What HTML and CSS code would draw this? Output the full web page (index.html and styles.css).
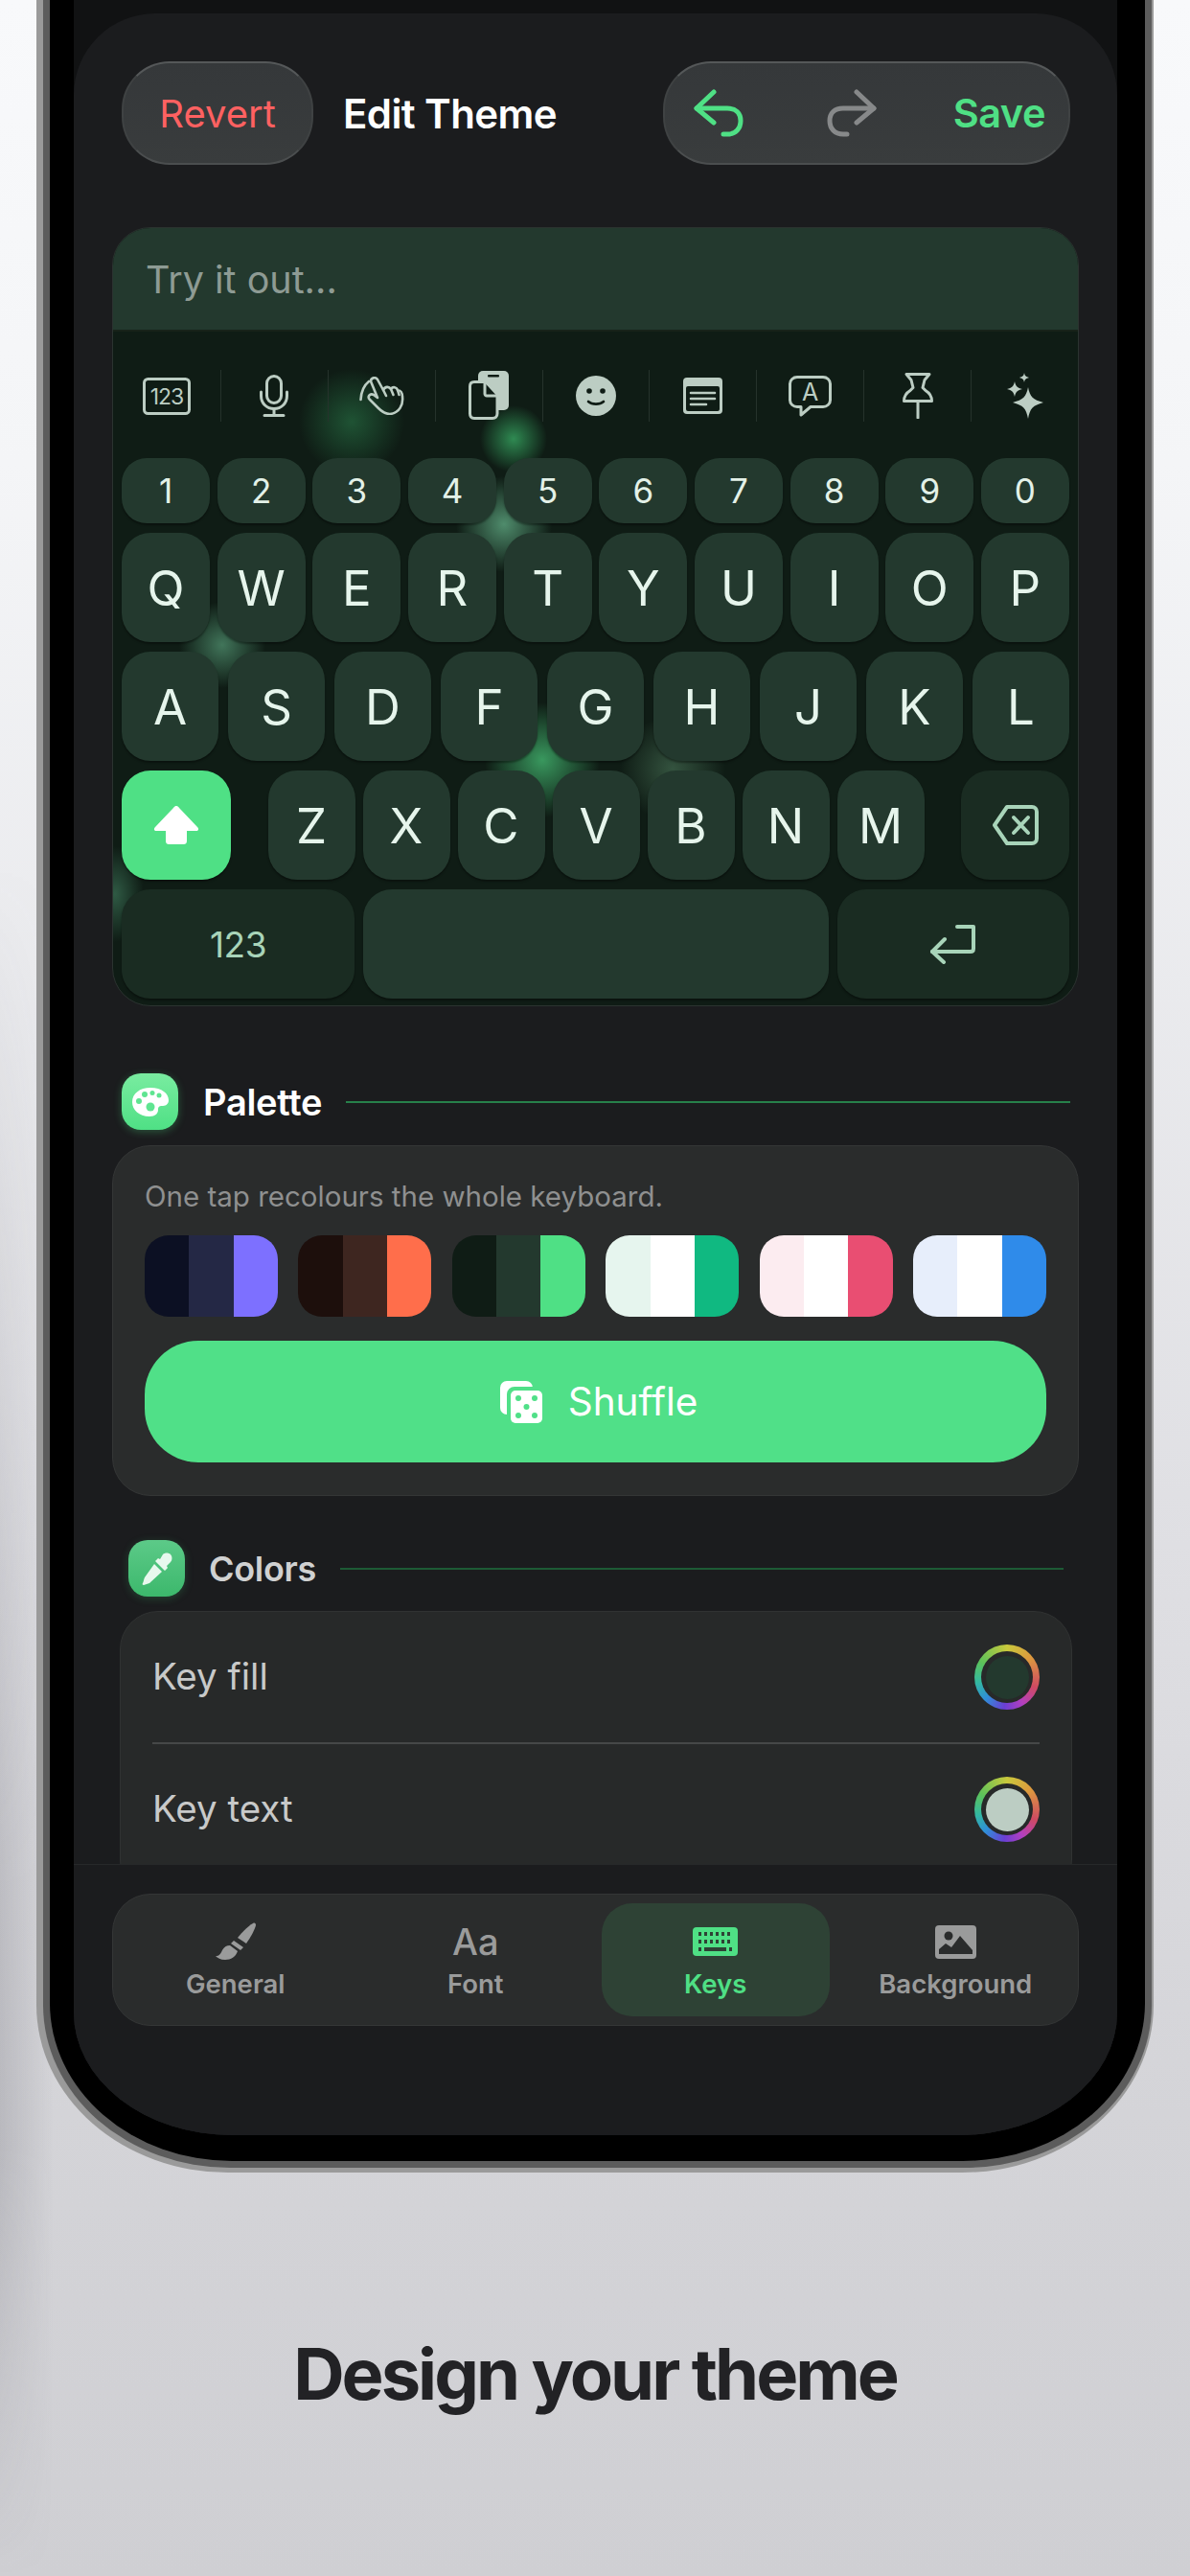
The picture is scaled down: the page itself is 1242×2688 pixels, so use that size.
FILE: index.html
```html
<!DOCTYPE html>
<html lang="en">
<head>
    <meta charset="UTF-8">
    <meta name="viewport" content="width=device-width, initial-scale=1.0">
    <title>Design your theme</title>
    <link rel="stylesheet" href="styles.css">
</head>
<body>
    <div class="side-shade"></div>
    <div class="phone">
        <div class="phone-inner">
            <div class="black-bezel">
                <div class="screen">
                    <div class="sheet">
                        <div class="scroll">
                            <!-- Шапка -->
                            <div class="header">
                                <div class="pill revert">Revert</div>
                                <div class="header-title">Edit Theme</div>
                                <div class="pill actions">
                                    <svg class="undo" width="52" height="50" viewBox="0 0 52 50" fill="none" stroke="#4fe085" stroke-width="5" stroke-linecap="round" stroke-linejoin="round"><path d="M21 3L3 20l18 15"/><path d="M3 20h32c9 0 14 5 14 13s-5 14-14 14h-4"/></svg>
                                    <svg class="redo" width="52" height="50" viewBox="0 0 52 50" fill="none" stroke="#87898a" stroke-width="5" stroke-linecap="round" stroke-linejoin="round"><path d="M31 3l18 17-18 15"/><path d="M49 20H17C8 20 3 25 3 33s5 14 14 14h4"/></svg>
                                    <span class="save">Save</span>
                                </div>
                            </div>

                            <!-- Превью клавиатуры -->
                            <div class="preview">
                                <div class="try-input">Try it out...</div>
                                <div class="keyboard">
                                    <span class="glow g1"></span>
                                    <span class="glow g2"></span>
                                    <span class="glow g3"></span>
                                    <span class="glow g4"></span>
                                    <span class="glow g5"></span>
                                    <span class="glow g6"></span>
                                    <span class="glow g7"></span>

                                    <div class="toolbar">
                                        <div class="tool">
                                            <svg width="50" height="39" viewBox="0 0 50 39"><rect x="1.5" y="1.5" width="47" height="36" rx="4" fill="none" stroke="#bccdc3" stroke-width="3"/><text x="25" y="28" text-anchor="middle" class="tool-num">123</text></svg>
                                        </div>
                                        <div class="tool">
                                            <svg width="30" height="44" viewBox="0 0 30 44" fill="none" stroke="#bccdc3" stroke-width="3" stroke-linecap="round"><rect x="7.5" y="1.5" width="15" height="28" rx="7.5"/><path d="M1.5 18v4c0 8 6 13.5 13.5 13.5S28.5 30 28.5 22v-4"/><path d="M15 36v6.5M5 42.5h20"/></svg>
                                        </div>
                                        <div class="tool">
                                            <svg width="47" height="40" viewBox="0 0 47 40" fill="none" stroke="#bccdc3" stroke-width="2.6" stroke-linecap="round" stroke-linejoin="round"><path d="M12 5C12 1 17 0 19 3l6 11c2-4 6-4 8-1 2-3 6-2 7 1 3 0 5 3 5 7 1 8-3 17-13 18-5 0-9-3-12-6l-9-9c-3-3 0-7 4-5l4 3z"/><path d="M25 14l3 6M33 13l2.500 6M40 14l1.500 5"/><path d="M1.5 24C2 15 5 9 10 5"/></svg>
                                        </div>
                                        <div class="tool">
                                            <svg width="42" height="52" viewBox="0 0 42 52"><rect x="10" y="0" width="32" height="41" rx="5" fill="#bccdc3"/><rect x="20" y="4" width="12" height="2.5" rx="1" fill="#0f1c15"/><path d="M6 11.500h12l12 13v20c0 3-2 5-5 5H6c-3 0-4.500-2-4.500-5V16c0-3 1.500-4.500 4.500-4.500z" fill="#0f1c15" stroke="#bccdc3" stroke-width="3"/><path d="M17 12v12c0 1 1 2 2 2h11" fill="none" stroke="#bccdc3" stroke-width="3"/></svg>
                                        </div>
                                        <div class="tool">
                                            <svg width="42" height="42" viewBox="0 0 42 42"><circle cx="21" cy="21" r="21" fill="#bccdc3"/><circle cx="14" cy="16" r="2.8" fill="#0f1c15"/><circle cx="28" cy="16" r="2.8" fill="#0f1c15"/><path d="M13 27c4 3.500 12 3.500 16 0" fill="none" stroke="#0f1c15" stroke-width="2.6" stroke-linecap="round"/></svg>
                                        </div>
                                        <div class="tool">
                                            <svg width="41" height="38" viewBox="0 0 41 38"><rect width="41" height="38" rx="4" fill="#bccdc3"/><rect x="3" y="9" width="35" height="26" rx="2" fill="#0f1c15"/><path d="M8 16h25M8 22h25M8 28h16" stroke="#bccdc3" stroke-width="2.6" stroke-linecap="round"/></svg>
                                        </div>
                                        <div class="tool">
                                            <svg width="45" height="43" viewBox="0 0 45 43" fill="none" stroke="#bccdc3" stroke-width="3" stroke-linejoin="round"><path d="M9 1.500h27c4 0 7.500 3 7.500 7v17c0 4-3.500 7-7.500 7H23L13 41v-8.500H9c-4 0-7.500-3-7.500-7v-17c0-4 3.500-7 7.500-7z"/><text x="22.5" y="26" text-anchor="middle" class="tool-a">A</text></svg>
                                        </div>
                                        <div class="tool">
                                            <svg width="32" height="48" viewBox="0 0 32 48" fill="none" stroke="#bccdc3" stroke-width="3" stroke-linecap="round" stroke-linejoin="round"><path d="M4 1.500h24l-5 6-2 8 3 3c5 3 6.500 6 6.500 11h-29c0-5 1.500-8 6.500-11l3-3-2-8z"/><path d="M16 29.500V47"/></svg>
                                        </div>
                                        <div class="tool">
                                            <svg width="38" height="48" viewBox="0 0 38 48" fill="#bccdc3"><path d="M22 15c2 10 5 13 16 16-11 3-14 6-16 17-2-11-5-14-16-17 11-3 14-6 16-16z"/><path d="M8 9c1 5 3 7 8 8-5 1-7 3-8 8-1-5-3-7-8-8 5-1 7-3 8-8z"/><path d="M18 0c.6 3 1.500 4 5 5-3.500 1-4.400 2-5 5-.6-3-1.500-4-5-5 3.500-1 4.400-2 5-5z"/></svg>
                                        </div>
                                    </div>

                                    <div class="row num-row">
                                        <div class="key num">1</div><div class="key num">2</div><div class="key num">3</div><div class="key num">4</div><div class="key num">5</div><div class="key num">6</div><div class="key num">7</div><div class="key num">8</div><div class="key num">9</div><div class="key num">0</div>
                                    </div>
                                    <div class="row top-row">
                                        <div class="key">Q</div><div class="key">W</div><div class="key">E</div><div class="key">R</div><div class="key">T</div><div class="key">Y</div><div class="key">U</div><div class="key">I</div><div class="key">O</div><div class="key">P</div>
                                    </div>
                                    <div class="row mid-row">
                                        <div class="key">A</div><div class="key">S</div><div class="key">D</div><div class="key">F</div><div class="key">G</div><div class="key">H</div><div class="key">J</div><div class="key">K</div><div class="key">L</div>
                                    </div>
                                    <div class="row low-row">
                                        <div class="key shift">
                                            <svg width="48" height="42" viewBox="0 0 48 42" fill="#fff"><path d="M24 1c1 0 2 .5 3 2l19 20c2 2 1 4-1 4H35v10c0 3-1 4-4 4H17c-3 0-4-1-4-4V27H3c-2 0-3-2-1-4L21 3c1-1.500 2-2 3-2z"/></svg>
                                        </div>
                                        <div class="letters">
                                            <div class="key">Z</div><div class="key">X</div><div class="key">C</div><div class="key">V</div><div class="key">B</div><div class="key">N</div><div class="key">M</div>
                                        </div>
                                        <div class="key dark del">
                                            <svg width="48" height="42" viewBox="0 0 48 42" fill="none" stroke="#a8d4b9" stroke-width="4" stroke-linecap="round" stroke-linejoin="round"><path d="M15 2h26c3 0 5 2 5 5v28c0 3-2 5-5 5H15L2 21z"/><path d="M22 13l15 16M37 13L22 29"/></svg>
                                        </div>
                                    </div>
                                    <div class="row bottom-row">
                                        <div class="key dark mode">123</div>
                                        <div class="key space"></div>
                                        <div class="key dark enter">
                                            <svg width="50" height="42" viewBox="0 0 50 42" fill="none" stroke="#a8d4b9" stroke-width="4" stroke-linecap="round" stroke-linejoin="round"><path d="M29 3h17v23c0 2-1 3-3 3H3"/><path d="M16 16L3 29l12 11"/></svg>
                                        </div>
                                    </div>
                                </div>
                            </div>

                            <!-- Палитра -->
                            <div class="section-head palette-head">
                                <div class="head-icon palette-icon">
                                    <svg width="38" height="30" viewBox="0 0 38 30"><path d="M19 0C31 0 38 6 38 13c0 5-4 6-7 6-3 0-4 1-4 4 0 4-3 7-9 7C7 30 0 23 0 15 0 6 8 0 19 0z" fill="#fff"/><g fill="#5fe591"><circle cx="7" cy="14" r="3"/><circle cx="13" cy="7" r="3"/><circle cx="21" cy="5.5" r="2.5"/><circle cx="28" cy="8" r="2.5"/><circle cx="19" cy="20" r="4.5"/></g></svg>
                                </div>
                                <div class="head-title">Palette</div>
                                <div class="head-line"></div>
                            </div>
                            <div class="card palette-card">
                                <div class="hint">One tap recolours the whole keyboard.</div>
                                <div class="swatches">
                                    <div class="swatch"><i class="c-navy1"></i><i class="c-navy2"></i><i class="c-violet"></i></div>
                                    <div class="swatch"><i class="c-brown1"></i><i class="c-brown2"></i><i class="c-orange"></i></div>
                                    <div class="swatch"><i class="c-green1"></i><i class="c-green2"></i><i class="c-green3"></i></div>
                                    <div class="swatch"><i class="c-mint"></i><i class="c-white"></i><i class="c-teal"></i></div>
                                    <div class="swatch"><i class="c-rose"></i><i class="c-white"></i><i class="c-pink"></i></div>
                                    <div class="swatch"><i class="c-ice"></i><i class="c-white"></i><i class="c-blue"></i></div>
                                </div>
                                <div class="shuffle">
                                    <svg width="44" height="44" viewBox="0 0 44 44"><rect x="0" y="0" width="34" height="35" rx="7" fill="#fff"/><rect x="7" y="6" width="39" height="40" rx="8" fill="#50e088"/><rect x="11" y="10" width="33" height="34" rx="5" fill="#fff"/><g fill="#50e088"><circle cx="19" cy="18" r="3"/><circle cx="36" cy="18" r="3"/><circle cx="27.5" cy="27" r="3"/><circle cx="19" cy="36" r="3"/><circle cx="36" cy="36" r="3"/></g></svg>
                                    <span>Shuffle</span>
                                </div>
                            </div>

                            <!-- Цвета -->
                            <div class="colors">
                                <div class="section-head colors-head">
                                    <div class="head-icon dropper-icon">
                                        <svg width="34" height="34" viewBox="0 0 34 34" fill="#e8f8ee"><path d="M23 2c2-2 6-2 8 0s2 6 0 8l-4 4 1 2-3 3-10-10 3-3 2 1z"/><path d="M14 12l8 8L9 32c-2 1-4 1-6 2-1 0-2-1-1-2 1-2 1-4 2-6z"/></svg>
                                    </div>
                                    <div class="head-title">Colors</div>
                                    <div class="head-line"></div>
                                </div>
                                <div class="card colors-card">
                                    <div class="color-row first">
                                        <span>Key fill</span>
                                        <div class="ring"><div class="ring-gap"><div class="ring-dot fill-dark"></div></div></div>
                                    </div>
                                    <div class="color-row">
                                        <span>Key text</span>
                                        <div class="ring"><div class="ring-gap"><div class="ring-dot fill-light"></div></div></div>
                                    </div>
                                </div>
                            </div>
                        </div>

                        <!-- Нижние вкладки -->
                        <div class="bottom-bar">
                            <div class="tabs">
                                <div class="tab">
                                    <div class="tab-icon">
                                        <svg width="44" height="40" viewBox="0 0 44 40" fill="#9a9b9b"><path d="M40 1c2-1 3 0 3 2-1 4-5 12-10 19l-9-6C30 9 36 3 40 1z"/><path d="M20 19l10 7-3 3-10-7z"/><path d="M16 24l8 6c-2 6-7 9-13 9-5 0-8-2-10-4 4 0 5-2 7-6 2-3 4-5 8-5z"/></svg>
                                    </div>
                                    <div class="tab-label">General</div>
                                </div>
                                <div class="tab">
                                    <div class="tab-icon aa">Aa</div>
                                    <div class="tab-label">Font</div>
                                </div>
                                <div class="tab active">
                                    <div class="tab-icon">
                                        <svg width="47" height="30" viewBox="0 0 47 30"><rect width="47" height="30" rx="4" fill="#4fe085"/><g fill="#2e4235"><rect x="6" y="5" width="3" height="4"/><rect x="12" y="5" width="3" height="4"/><rect x="18" y="5" width="3" height="4"/><rect x="24" y="5" width="3" height="4"/><rect x="30" y="5" width="3" height="4"/><rect x="36" y="5" width="3" height="4"/><rect x="6" y="13" width="3" height="4"/><rect x="12" y="13" width="3" height="4"/><rect x="18" y="13" width="3" height="4"/><rect x="24" y="13" width="3" height="4"/><rect x="30" y="13" width="3" height="4"/><rect x="36" y="13" width="3" height="4"/><rect x="6" y="21" width="3" height="4"/><rect x="12" y="21" width="23" height="4"/><rect x="38" y="21" width="3" height="4"/></g></svg>
                                    </div>
                                    <div class="tab-label">Keys</div>
                                </div>
                                <div class="tab">
                                    <div class="tab-icon">
                                        <svg width="43" height="35" viewBox="0 0 43 35"><rect width="43" height="35" rx="4" fill="#9a9b9b"/><circle cx="14" cy="11" r="4.5" fill="#2a2c2c"/><path d="M4 30v-5l7-6 6 4 9-12 13 15v4z" fill="#2a2c2c"/></svg>
                                    </div>
                                    <div class="tab-label">Background</div>
                                </div>
                            </div>
                        </div>
                    </div>
                </div>
            </div>
        </div>
    </div>

    <h1 class="caption">Design your theme</h1>
</body>
</html>
```

FILE: styles.css
```css
body {
    position: relative;
    width: 1242px;
    height: 2688px;
    margin: 0;
    overflow: hidden;
    background: linear-gradient(180deg, #f8f9fb 0%, #f4f5f7 18%, #dfdfe3 60%, #d4d4d8 82%, #cfcfd3 100%);
    font-family: Inter, "Liberation Sans", sans-serif;
}

.side-shade {
    position: absolute;
    left: 0;
    top: 900px;
    width: 55px;
    height: 1788px;
    background: linear-gradient(90deg, rgba(90, 90, 100, 0.22), rgba(90, 90, 100, 0));
    -webkit-mask-image: linear-gradient(180deg, transparent, #000 60%, #000 75%, transparent);
    mask-image: linear-gradient(180deg, transparent, #000 60%, #000 75%, transparent);
}

/* Корпус телефона */
.phone {
    position: relative;
    width: 1166px;
    height: 2267px;
    margin-left: 38px;
    box-sizing: border-box;
    padding: 0 0 5px 0;
    background: #9a9a9a;
    border-radius: 0 0 200px 200px / 0 0 175px 175px;
}
.phone-inner {
    height: 100%;
    box-sizing: border-box;
    margin: 0 2px 0 7px;
    padding: 0 0 7px 0;
    background: #5c5c5c;
    border-radius: 0 0 195px 195px / 0 0 170px 170px;
}
.black-bezel {
    height: 100%;
    box-sizing: border-box;
    margin: 0 7px;
    padding: 0 29px 27px 25px;
    background: #000;
    border-radius: 0 0 190px 190px / 0 0 165px 165px;
}
.screen {
    height: 100%;
    overflow: hidden;
    background: #111213;
    border-radius: 0 0 165px 165px / 0 0 128px 128px;
}
.sheet {
    display: flex;
    flex-direction: column;
    height: 2214px;
    margin-top: 14px;
    background: #1b1c1e;
    border-radius: 85px 85px 0 0;
}
.scroll {
    height: 1931px;
    padding: 0 39px 0 40px;
    overflow: hidden;
}

/* Шапка */
.header {
    display: flex;
    align-items: center;
    height: 108px;
    margin: 50px 10px 0 10px;
}
.pill {
    box-sizing: border-box;
    display: flex;
    align-items: center;
    height: 108px;
    background: linear-gradient(180deg, #35383a, #393c3d);
    border-radius: 50px;
    border: 2px solid #4b4e4f;
    border-top-color: #555859;
    border-left-color: #3f4243;
    border-right-color: #3f4243;
    font-size: 40px;
}
.revert {
    justify-content: center;
    width: 200px;
    color: #ff6161;
}
.header-title {
    margin-left: 31px;
    color: #fff;
    font-size: 42px;
    font-weight: 600;
    letter-spacing: -0.6px;
}
.actions {
    width: 425px;
    margin-left: auto;
    padding: 0 24px 0 30px;
}
.redo {
    margin-left: 87px;
}
.save {
    margin-left: auto;
    color: #4fe085;
    font-size: 41.5px;
    font-weight: 600;
    letter-spacing: -0.5px;
}

/* Превью */
.preview {
    box-sizing: border-box;
    width: 1009px;
    height: 813px;
    margin-top: 65px;
    overflow: hidden;
    border: 1px solid #2b3330;
    border-radius: 40px;
    background: #0f1c15;
}
.try-input {
    box-sizing: border-box;
    height: 108px;
    padding: 30px 0 0 34px;
    background: #23392e;
    border-bottom: 2px solid #172219;
    color: #8e9b94;
    font-size: 39.5px;
    line-height: 48px;
}
.keyboard {
    position: relative;
    padding: 40px 9px 0 9px;
    height: 703px;
    box-sizing: border-box;
}
.glow {
    position: absolute;
    border-radius: 50%;
}
.g1 {
    left: 194px;
    top: 39px;
    width: 110px;
    height: 110px;
    background: radial-gradient(closest-side, #1f5334, rgba(31, 83, 52, 0));
}
.g2 {
    left: 383px;
    top: 77px;
    width: 70px;
    height: 70px;
    background: radial-gradient(closest-side, #2f8a52, rgba(47, 138, 82, 0));
}
.g3 {
    left: 358px;
    top: 151px;
    width: 100px;
    height: 100px;
    background: radial-gradient(closest-side, #4f8c6c, rgba(79, 140, 108, 0));
}
.g4 {
    left: 69px;
    top: 282px;
    width: 90px;
    height: 90px;
    background: radial-gradient(closest-side, #41755a, rgba(65, 117, 90, 0));
}
.g5 {
    left: 388px;
    top: 387px;
    width: 120px;
    height: 120px;
    background: radial-gradient(closest-side, #39985e, rgba(57, 152, 94, 0));
}
.g6 {
    left: 529px;
    top: 401px;
    width: 110px;
    height: 110px;
    background: radial-gradient(closest-side, #34533f, rgba(52, 83, 63, 0));
}
.g7 {
    left: -28px;
    top: 537px;
    width: 60px;
    height: 100px;
    background: radial-gradient(closest-side, #2f5a44, rgba(47, 90, 68, 0));
}
.toolbar {
    position: relative;
    display: grid;
    grid-template-columns: repeat(9, 1fr);
    margin: 0 -9px;
    height: 54px;
}
.tool {
    display: flex;
    align-items: center;
    justify-content: center;
    border-left: 1px solid #25322b;
}
.tool:first-child {
    border-left: none;
}
.tool-num {
    fill: #bccdc3;
    font-size: 23px;
    letter-spacing: -1px;
}
.tool-a {
    fill: #bccdc3;
    stroke: none;
    font-size: 25px;
}
.row {
    position: relative;
    display: flex;
    justify-content: space-between;
}
.num-row {
    margin-top: 38px;
}
.top-row {
    margin-top: 10px;
}
.mid-row,
.low-row,
.bottom-row {
    margin-top: 10px;
}
.key {
    display: flex;
    align-items: center;
    justify-content: center;
    box-sizing: border-box;
    width: 92px;
    height: 114px;
    background: #23392e;
    border-radius: 30px;
    box-shadow: 0 2px 2px rgba(0, 0, 0, 0.35);
    color: #e6f5ec;
    font-size: 51px;
}
.num {
    height: 68px;
    border-radius: 26px;
    color: #e3f1e8;
    font-size: 35px;
}
.mid-row .key {
    width: 101px;
}
.shift {
    width: 114px;
    background: #4fe085;
}
.letters {
    display: flex;
    gap: 8px;
}
.low-row .letters .key {
    width: 91px;
}
.dark {
    background: #1a2c22;
}
.del {
    width: 113px;
}
.mode {
    width: 243px;
    color: #a8d4b9;
    font-size: 37px;
    letter-spacing: -0.5px;
}
.space {
    width: 486px;
}
.enter {
    width: 242px;
}

/* Секции */
.section-head {
    display: flex;
    align-items: center;
    height: 59px;
    padding: 0 10px;
}
.palette-head {
    margin-top: 70px;
}
.head-icon {
    display: flex;
    align-items: center;
    justify-content: center;
    width: 59px;
    height: 59px;
    flex: none;
    border-radius: 20px;
}
.palette-icon {
    background: linear-gradient(180deg, #79eca0, #4fe085);
    box-shadow: 0 2px 8px rgba(79, 224, 133, 0.3);
}
.dropper-icon {
    background: linear-gradient(180deg, #5cca88, #3cb86c);
    box-shadow: 0 2px 8px rgba(60, 184, 108, 0.25);
}
.head-title {
    margin-left: 26px;
    color: #fff;
    font-size: 38px;
    font-weight: 600;
    letter-spacing: -0.3px;
}
.head-line {
    flex: 1;
    height: 2px;
    margin-left: 25px;
    background: #27804a;
}
.card {
    box-sizing: border-box;
    background: #2a2c2c;
    border: 1px solid #343636;
    border-radius: 40px;
}
.palette-card {
    width: 1009px;
    height: 366px;
    margin-top: 16px;
    padding: 34px 33px 0 33px;
}
.hint {
    color: #8f9090;
    font-size: 29.5px;
    line-height: 36px;
}
.swatches {
    display: flex;
    justify-content: space-between;
    margin-top: 23px;
}
.swatch {
    display: flex;
    width: 139px;
    height: 85px;
    overflow: hidden;
    border-radius: 25px;
}
.swatch i {
    flex: 1;
}
.c-navy1 { background: #0c1023; }
.c-navy2 { background: #242845; }
.c-violet { background: #7d70ff; }
.c-brown1 { background: #1d0f0c; }
.c-brown2 { background: #3e2620; }
.c-orange { background: #ff6e4b; }
.c-green1 { background: #0f1c15; }
.c-green2 { background: #23392e; }
.c-green3 { background: #4fe085; }
.c-mint { background: #e6f5ee; }
.c-white { background: #fff; }
.c-teal { background: #10b981; }
.c-rose { background: #fcecf0; }
.c-pink { background: #e94e72; }
.c-ice { background: #e7eefb; }
.c-blue { background: #2f8bea; }
.shuffle {
    display: flex;
    align-items: center;
    justify-content: center;
    gap: 27px;
    height: 127px;
    margin-top: 25px;
    padding-left: 7px;
    background: #50e088;
    border-radius: 56px;
    color: #fff;
    font-size: 40.5px;
}
.colors {
    padding: 0 8px;
}
.colors-head {
    margin-top: 46px;
    padding: 0 9px;
}
.colors-head .head-title {
    margin-left: 25px;
    color: #d0d1d1;
    font-size: 36px;
}
.colors-head .head-line {
    background: #1d5a35;
}
.colors-card {
    height: 300px;
    margin-top: 15px;
    padding: 0 33px;
    background: #272929;
    border-color: #303232;
}
.color-row {
    display: flex;
    align-items: center;
    justify-content: space-between;
    height: 136px;
    padding-top: 0;
    color: #c8c9c9;
    font-size: 38.5px;
}
.color-row span {
    margin-top: -3px;
}
.first {
    border-bottom: 2px solid #464848;
}
.ring {
    display: flex;
    align-items: center;
    justify-content: center;
    width: 68px;
    height: 68px;
    border-radius: 50%;
    background: conic-gradient(#c9c93c, #dd9a3e 50deg, #cf4a62 110deg, #b23fc0 150deg, #6a3fd4 185deg, #2f8fd8 225deg, #33b8a0 260deg, #5cc25a 300deg, #c9c93c);
}
.ring-gap {
    display: flex;
    align-items: center;
    justify-content: center;
    width: 54px;
    height: 54px;
    border-radius: 50%;
    background: #272929;
}
.ring-dot {
    width: 45px;
    height: 45px;
    border-radius: 50%;
}
.fill-dark {
    background: #23392e;
}
.fill-light {
    background: #bccdc3;
}

/* Вкладки */
.bottom-bar {
    flex: 1;
    padding: 30px 39px 0 40px;
    background: #1b1c1e;
    border-top: 1px solid #27292a;
}
.tabs {
    box-sizing: border-box;
    display: grid;
    grid-template-columns: repeat(4, 1fr);
    gap: 13px;
    width: 1009px;
    height: 138px;
    padding: 9px;
    background: #2a2c2c;
    border: 1px solid #343636;
    border-radius: 40px;
}
.tab {
    display: flex;
    flex-direction: column;
    align-items: center;
    padding-top: 20px;
    border-radius: 32px;
    color: #9a9b9b;
}
.tab.active {
    background: #2e4235;
    color: #4fe085;
}
.tab-icon {
    display: flex;
    align-items: center;
    justify-content: center;
    height: 40px;
}
.aa {
    font-size: 38px;
    font-weight: 500;
}
.tab-label {
    margin-top: 8px;
    font-size: 27.5px;
    line-height: 32px;
    font-weight: 600;
}

.caption {
    margin: 163px 0 0 0;
    color: #222225;
    font-size: 74px;
    line-height: 94px;
    font-weight: 700;
    letter-spacing: -3px;
    text-align: center;
}
```
